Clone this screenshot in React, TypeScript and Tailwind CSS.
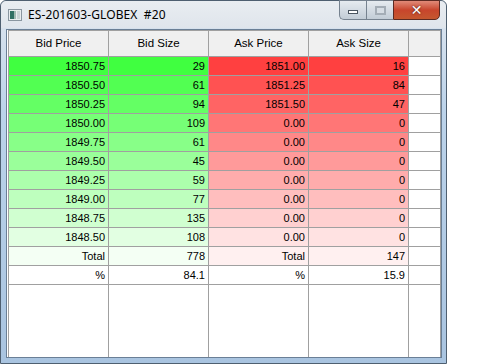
const bids = [
  ['1850.75', '29'],
  ['1850.50', '61'],
  ['1850.25', '94'],
  ['1850.00', '109'],
  ['1849.75', '61'],
  ['1849.50', '45'],
  ['1849.25', '59'],
  ['1849.00', '77'],
  ['1848.75', '135'],
  ['1848.50', '108'],
];

const asks = [
  ['1851.00', '16'],
  ['1851.25', '84'],
  ['1851.50', '47'],
  ['0.00', '0'],
  ['0.00', '0'],
  ['0.00', '0'],
  ['0.00', '0'],
  ['0.00', '0'],
  ['0.00', '0'],
  ['0.00', '0'],
];

const shade = (i: number) => 64 + i * 18;

function Cell({ text, bg, head }: { text: string; bg?: string; head?: boolean }) {
  return (
    <div
      className={`border-r border-b border-[#a0a0a0] flex items-center ${
        head ? 'justify-center h-[26px] bg-[#f0f0f0] text-[11.5px]' : 'justify-end pr-[3px] h-[19px]'
      }`}
      style={bg ? { backgroundColor: bg } : undefined}
    >
      {text}
    </div>
  );
}

function WinIcon() {
  return (
    <svg width="14" height="12" viewBox="0 0 14 12">
      <rect x="0.5" y="0.5" width="13" height="11" fill="#e8ecef" stroke="#8a96a0" />
      <rect x="2" y="2" width="4" height="8" fill="#2f6f64" />
      <rect x="6" y="2" width="2" height="8" fill="#9fb9b2" />
      <rect x="9" y="2" width="3" height="8" fill="#c9d3d6" />
    </svg>
  );
}

export default function App() {
  return (
    <div className="w-[500px] h-[364px] bg-white overflow-hidden" style={{ fontFamily: '"Liberation Sans", Arial, sans-serif' }}>
      <div className="w-[447px] h-[364px] rounded-t-[6px] border border-[#4e5f70] bg-gradient-to-b from-[#dfe6ee] via-[#bcd3ea] via-30% to-[#a9c4e0] flex flex-col relative">
        {/* title bar */}
        <div className="h-[27px] flex items-center pl-[7px] gap-[6px] rounded-t-[6px] bg-gradient-to-b from-[#e9edf1] to-[#dfe5ec]">
          <WinIcon />
          <span className="text-[12px] text-black tracking-[0.1px]" style={{ fontFamily: '"Noto Sans", "Open Sans", sans-serif' }}>
            ES-201603-GLOBEX&nbsp;&nbsp;#20
          </span>
        </div>
        <div className="absolute top-[-1px] left-[338px] flex h-[20px]">
          <div className="w-[27px] h-full border border-[#76828f] border-r-0 rounded-bl-[5px] bg-gradient-to-b from-[#e6ebf0] to-[#c2ccd6] flex items-center justify-center">
            <div className="w-[10px] h-[4px] bg-white border border-[#4a5560] mt-[3px]" />
          </div>
          <div className="w-[27px] h-full border border-[#76828f] border-r-0 bg-gradient-to-b from-[#e6ebf0] to-[#c2ccd6] flex items-center justify-center">
            <div className="w-[11px] h-[9px] border-[2px] border-[#a4adb6] bg-[#d6dde4]" />
          </div>
          <div className="w-[47px] h-full border border-[#5c2a22] rounded-br-[5px] bg-gradient-to-b from-[#e08a78] via-[#c8452c] to-[#c4572f] flex items-center justify-center">
            <span className="text-white font-bold text-[14px] leading-none" style={{ fontFamily: '"DejaVu Sans", sans-serif', textShadow: '0 0 2px #3a1a14' }}>
              ✕
            </span>
          </div>
        </div>
        {/* client area */}
        <div className="flex-1 pl-[5px] pr-[4px] pb-[5px] pt-[1px]">
          <div className="h-full border border-[#6a7f96] bg-white pl-[1px]">
            <div className="h-full border-l border-t border-[#a0a0a0] flex flex-col text-[11px] text-black">
              <div className="grid grid-cols-[100px_100px_100px_100px_1fr]">
                <Cell head text="Bid Price" />
                <Cell head text="Bid Size" />
                <Cell head text="Ask Price" />
                <Cell head text="Ask Size" />
                <Cell head text="" />
                {bids.map((b, i) => {
                  const s = shade(i);
                  const g = `rgb(${s},255,${s})`;
                  const r = `rgb(255,${s},${s})`;
                  return [
                    <Cell key={`bp${i}`} text={b[0]} bg={g} />,
                    <Cell key={`bs${i}`} text={b[1]} bg={g} />,
                    <Cell key={`ap${i}`} text={asks[i][0]} bg={r} />,
                    <Cell key={`as${i}`} text={asks[i][1]} bg={r} />,
                    <Cell key={`x${i}`} text="" />,
                  ];
                })}
                <Cell text="Total" bg="rgb(244,255,244)" />
                <Cell text="778" bg="rgb(244,255,244)" />
                <Cell text="Total" bg="rgb(255,240,240)" />
                <Cell text="147" bg="rgb(255,240,240)" />
                <Cell text="" />
                <Cell text="%" />
                <Cell text="84.1" />
                <Cell text="%" />
                <Cell text="15.9" />
                <Cell text="" />
              </div>
              <div className="flex-1 grid grid-cols-[100px_100px_100px_100px_1fr]">
                <div className="border-r border-[#a0a0a0]" />
                <div className="border-r border-[#a0a0a0]" />
                <div className="border-r border-[#a0a0a0]" />
                <div className="border-r border-[#a0a0a0]" />
                <div className="border-r border-[#a0a0a0]" />
              </div>
            </div>
          </div>
        </div>
      </div>
    </div>
  );
}
